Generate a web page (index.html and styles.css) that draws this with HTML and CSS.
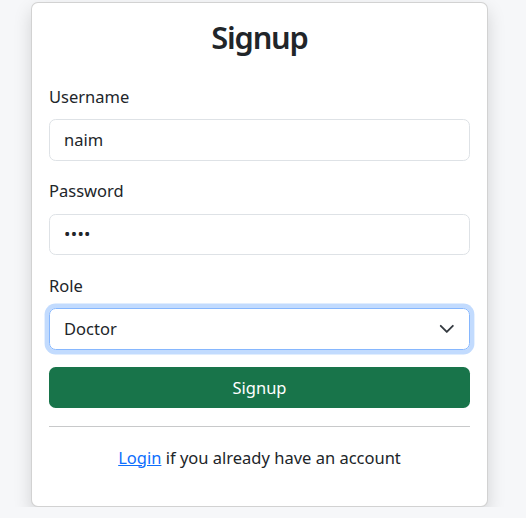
FILE: index.html
```html
<!DOCTYPE html>
<html>
<head>
<meta charset="utf-8">
<link rel="stylesheet" href="styles.css">
</head>
<body>
<div class="card">
  <h3 class="title">Signup</h3>
  <div class="group">
    <label class="label">Username</label>
    <div class="control">naim</div>
  </div>
  <div class="group">
    <label class="label">Password</label>
    <div class="control dots">••••</div>
  </div>
  <div class="group">
    <label class="label">Role</label>
    <div class="control select">
      <span>Doctor</span>
      <svg class="chev" width="17.6" height="13.2" viewBox="0 0 16 12"><path d="m2.5 3.5 5.5 5.5 5.5-5.5" fill="none" stroke="#343a40" stroke-width="1.7" stroke-linecap="round" stroke-linejoin="round"/></svg>
    </div>
  </div>
  <button class="btn">Signup</button>
  <hr class="sep">
  <p class="foot"><a href="#" class="link">Login</a> if you already have an account</p>
</div>
</body>
</html>
```
FILE: styles.css
```css
* { box-sizing: border-box; }
body {
  margin: 0;
  background: #f6f7f9;
  font-family: "Noto Sans", "Open Sans", sans-serif;
  color: #212529;
  font-size: 16.5px;
}
.card {
  margin: 2px 0 0 31px;
  width: 457px;
  background: #fff;
  border: 1px solid rgba(0,0,0,0.175);
  border-radius: 7px;
  padding: 17.6px 17px;
  box-shadow: 0 8.8px 17.6px rgba(0,0,0,0.15);
}
.title {
  margin: -2px 0 28.4px;
  text-align: center;
  font-size: 30.8px;
  font-weight: 600;
  letter-spacing: -1.2px;
  line-height: 37px;
}
.group { margin-bottom: 17.6px; }
.label {
  display: block;
  line-height: 26.4px;
  margin-bottom: 8.8px;
}
.control {
  height: 41.6px;
  border: 1px solid #dee2e6;
  border-radius: 6.6px;
  padding: 0 13.2px 0 14px;
  display: flex;
  align-items: center;
  line-height: 26.4px;
}
.dots { font-size: 17px; letter-spacing: 0.3px; }
.select {
  justify-content: space-between;
  border-color: #86b7fe;
  box-shadow: 0 0 0 4.4px rgba(13,110,253,0.25);
}
.chev { display: block; }
.btn {
  display: block;
  width: 100%;
  height: 41.2px;
  border: 0;
  border-radius: 6.6px;
  background: #18744a;
  color: #fff;
  font: inherit;
  line-height: 26.4px;
}
.sep {
  margin: 17.6px 0;
  border: 0;
  border-top: 1px solid #c8c9ca;
}
.foot {
  margin: 0 0 17.6px;
  text-align: center;
  line-height: 26.4px;
}
.link { color: #0d6efd; text-decoration: underline; }
```
